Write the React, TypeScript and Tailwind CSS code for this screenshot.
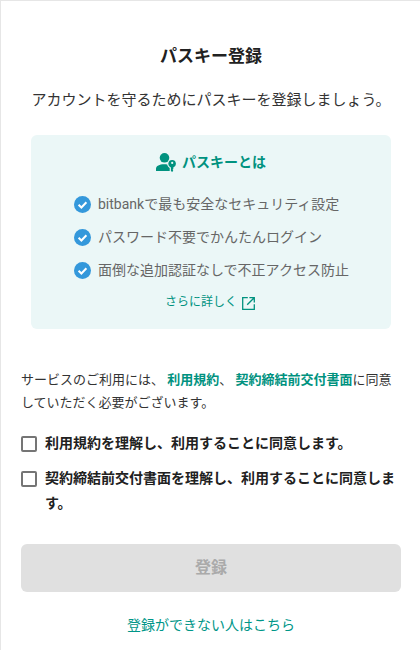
import React from "react";

const features = [
  "bitbankで最も安全なセキュリティ設定",
  "パスワード不要でかんたんログイン",
  "面倒な追加認証なしで不正アクセス防止",
];

const agreements = [
  "利用規約を理解し、利用することに同意します。",
  "契約締結前交付書面を理解し、利用することに同意します。",
];

function CheckBadge() {
  return (
    <svg width="17" height="17" viewBox="0 0 17 17" className="shrink-0">
      <circle cx="8.5" cy="8.5" r="8.5" fill="#3498db" />
      <path d="M4.6 8.8l2.8 2.7 5-5.2" fill="none" stroke="#fff" strokeWidth="2" />
    </svg>
  );
}

function PasskeyIcon() {
  return (
    <svg width="20" height="19" viewBox="0 0 20 19" fill="#00927f" className="shrink-0">
      <circle cx="8.5" cy="4.8" r="4.8" />
      <path d="M0 18v-2.5C0 13 3.6 11.2 8 11.2c1.2 0 2.2.1 3.2.4.3 1.5 1.2 2.6 2.5 3.3V18z" />
      <path
        fillRule="evenodd"
        d="M16.2 7a3.8 3.8 0 0 1 1.1 7.4V16l-.7.7.7.8-1.1 1.5-1.3-1v-3.6A3.8 3.8 0 0 1 16.2 7zm0 1.8a1.1 1.1 0 1 0 0 2.2 1.1 1.1 0 0 0 0-2.2z"
      />
    </svg>
  );
}

function ExternalIcon() {
  return (
    <svg width="13" height="13" viewBox="0 0 13 13" fill="none" stroke="#00927f" strokeWidth="1.3" className="mt-[2px] shrink-0">
      <path d="M5.8.7H.7v11.6h11.6V7.2" />
      <path d="M7.4.7h4.9v4.9M12.2.8 5.2 7.8" />
    </svg>
  );
}

export default function App() {
  return (
    <div
      className="h-[650px] w-[420px] overflow-hidden border-t border-l border-[#e6e6e6] bg-white pl-5 pr-[19px] text-[#212121]"
      style={{ fontFamily: 'Roboto, "Noto Sans CJK JP", sans-serif' }}
    >
      <h1 className="mt-[42px] text-center text-[17px] leading-[26px] font-bold">パスキー登録</h1>
      <p className="mt-[19px] text-center text-[15px] leading-[24px] text-[#333]">
        アカウントを守るためにパスキーを登録しましょう。
      </p>

      <section className="mx-[10px] mt-[23px] h-[194px] rounded-md bg-[#ebf7f7] pt-[17px]">
        <div className="flex h-5 items-center justify-center gap-[6px]">
          <PasskeyIcon />
          <h2 className="text-sm leading-5 font-bold text-[#00927f]">パスキーとは</h2>
        </div>
        <ul className="mt-[22px] flex flex-col items-start gap-[13px] pl-[43px]">
          {features.map((text) => (
            <li key={text} className="flex h-5 items-center gap-[7px] text-sm leading-5 text-[#666]">
              <CheckBadge />
              {text}
            </li>
          ))}
        </ul>
        <a className="mt-[12px] flex h-5 items-center justify-center gap-[5px] pr-[2px] text-xs leading-5 text-[#00927f]">
          さらに詳しく
          <ExternalIcon />
        </a>
      </section>

      <p className="mt-[39px] text-[13px] leading-[23px] text-[#333]">
        サービスのご利用には、 <a className="font-bold text-[#00927f]">利用規約</a>、{" "}
        <a className="font-bold text-[#00927f]">契約締結前交付書面</a>に同意していただく必要がございます。
      </p>

      <div className="mt-[17px] flex flex-col gap-[10px]">
        {agreements.map((text) => (
          <label key={text} className="flex items-start gap-2 text-sm leading-[25px] font-bold">
            <span className="mt-[5px] size-4 shrink-0 rounded-[2px] border-2 border-[#757575]" />
            {text}
          </label>
        ))}
      </div>

      <button
        type="button"
        disabled
        className="mt-[28px] h-12 w-full rounded-md bg-[#e0e0e0] text-base font-bold text-[#aaa]"
      >
        登録
      </button>
      <a className="mt-[23px] block text-center text-sm leading-5 text-[#009688]">登録ができない人はこちら</a>
    </div>
  );
}
